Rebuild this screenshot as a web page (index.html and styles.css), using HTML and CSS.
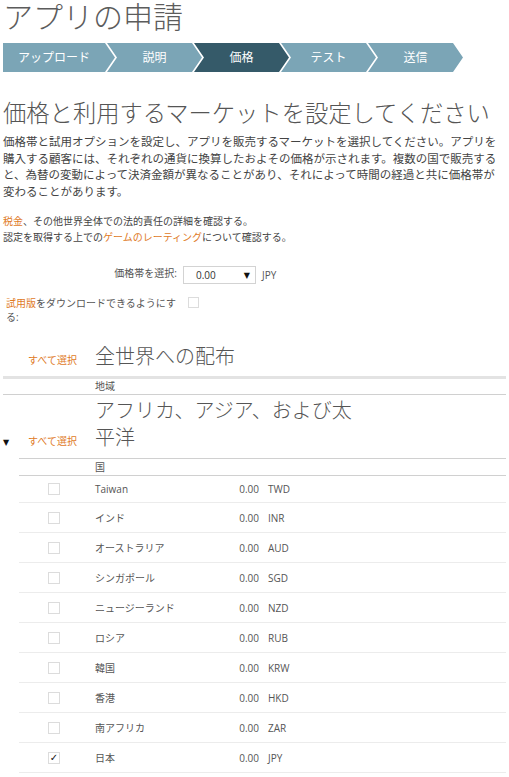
FILE: index.html
```html
<html>

<head>
  <meta charset="utf-8">
  <link rel="stylesheet" href="styles.css">
</head>

<body>
  <div class="page">
    <h1 class="page-title">アプリの申請</h1>

    <div class="steps">
      <div class="step">アップロード</div>
      <div class="step">説明</div>
      <div class="step current">価格</div>
      <div class="step">テスト</div>
      <div class="step">送信</div>
    </div>

    <h2 class="heading">価格と利用するマーケットを設定してください</h2>
    <p class="intro">価格帯と試用オプションを設定し、アプリを販売するマーケットを選択してください。アプリを購入する顧客には、それぞれの通貨に換算したおよその価格が示されます。複数の国で販売すると、為替の変動によって決済金額が異なることがあり、それによって時間の経過と共に価格帯が変わることがあります。</p>
    <p class="refs">
      <a href="#">税金</a>、その他世界全体での法的責任の詳細を確認する。<br>
      認定を取得する上での<a href="#">ゲームのレーティング</a>について確認する。
    </p>

    <div class="pricing">
      <div class="field">
        <label class="field-label right">価格帯を選択:</label>
        <div class="select"><span>0.00</span><span class="select-arrow">▼</span></div>
        <span class="currency">JPY</span>
      </div>
      <div class="field trial">
        <label class="field-label"><a href="#">試用版</a>をダウンロードできるようにする:</label>
        <span class="box"></span>
      </div>
    </div>

    <div class="markets">
      <div class="market-head world">
        <span class="toggle"></span>
        <a class="select-all" href="#">すべて選択</a>
        <div class="market-name">全世界への配布</div>
      </div>
      <div class="subhead">地域</div>

      <div class="market-head">
        <span class="toggle">▼</span>
        <a class="select-all" href="#">すべて選択</a>
        <div class="market-name">アフリカ、アジア、および太平洋</div>
      </div>
      <div class="region">
        <div class="subhead">国</div>
        <div class="country"><span class="box"></span><span>Taiwan</span><span class="price">0.00</span><span class="code">TWD</span></div>
        <div class="country"><span class="box"></span><span>インド</span><span class="price">0.00</span><span class="code">INR</span></div>
        <div class="country"><span class="box"></span><span>オーストラリア</span><span class="price">0.00</span><span class="code">AUD</span></div>
        <div class="country"><span class="box"></span><span>シンガポール</span><span class="price">0.00</span><span class="code">SGD</span></div>
        <div class="country"><span class="box"></span><span>ニュージーランド</span><span class="price">0.00</span><span class="code">NZD</span></div>
        <div class="country"><span class="box"></span><span>ロシア</span><span class="price">0.00</span><span class="code">RUB</span></div>
        <div class="country"><span class="box"></span><span>韓国</span><span class="price">0.00</span><span class="code">KRW</span></div>
        <div class="country"><span class="box"></span><span>香港</span><span class="price">0.00</span><span class="code">HKD</span></div>
        <div class="country"><span class="box"></span><span>南アフリカ</span><span class="price">0.00</span><span class="code">ZAR</span></div>
        <div class="country"><span class="box checked">✓</span><span>日本</span><span class="price">0.00</span><span class="code">JPY</span></div>
      </div>
    </div>
  </div>
</body>

</html>
```

FILE: styles.css
```css
body {
  margin: 0;
  font-family: "Open Sans", "Noto Sans CJK JP", sans-serif;
  color: #555;
  background: #fff;
}

a {
  color: #e07a1f;
  text-decoration: none;
}

.page {
  padding: 0 3px;
}

.page-title {
  margin: 0 0 9px;
  font-size: 30px;
  line-height: 34px;
  font-weight: 300;
  color: #5c5c5c;
}

/* wizard steps: each one is an arrow that fits into the notch of the next */
.steps {
  display: flex;
  height: 29px;
}

.step {
  box-sizing: border-box;
  width: 95px;
  margin-left: -8px;
  padding: 0 10px;
  background: #7ba5b6;
  color: #fff;
  font-size: 12px;
  line-height: 29px;
  text-align: center;
  clip-path: polygon(0 0, calc(100% - 10px) 0, 100% 50%, calc(100% - 10px) 100%, 0 100%, 10px 50%);
}

.step:first-child {
  width: 112px;
  margin-left: 0;
  padding-left: 0;
  clip-path: polygon(0 0, calc(100% - 10px) 0, 100% 50%, calc(100% - 10px) 100%, 0 100%);
}

.step.current {
  background: #355a69;
}

.heading {
  margin: 27px 0 0;
  font-size: 23.3px;
  line-height: 28px;
  font-weight: 300;
  color: #555;
}

.intro {
  margin: 7px 0 0;
  font-size: 11.5px;
  line-height: 16.5px;
  color: #444;
}

.refs {
  margin: 14px 0 0;
  font-size: 10px;
  line-height: 15.5px;
  color: #444;
}

/* price tier + trial */
.pricing {
  margin-top: 21px;
  padding-left: 3px;
}

.field {
  display: grid;
  grid-template-columns: 171px auto auto;
  column-gap: 6px;
  justify-content: start;
  align-items: center;
}

.field-label {
  align-self: start;
  font-size: 10px;
  line-height: 14px;
  color: #555;
}

.field-label.right {
  text-align: right;
}

.select {
  box-sizing: border-box;
  display: flex;
  align-items: center;
  justify-content: space-between;
  width: 73px;
  height: 18px;
  padding: 0 5px 0 12px;
  border: 1px solid #d3d3d3;
  font-size: 10px;
  color: #333;
}

.select-arrow {
  font-family: "DejaVu Sans", sans-serif;
  font-size: 8px;
  color: #111;
}

.currency {
  font-size: 10px;
  color: #555;
}

.trial {
  margin-top: 13px;
  align-items: start;
}

.trial .field-label {
  line-height: 13.5px;
}

.trial .box {
  margin-left: 5px;
}

.box {
  box-sizing: border-box;
  display: block;
  width: 11px;
  height: 11px;
  border: 1px solid #dcdcdc;
  background: #fff;
}

/* markets */
.markets {
  margin-top: 19px;
}

.market-head {
  display: grid;
  grid-template-columns: 25px 67px 270px;
  align-items: last baseline;
  padding: 2px 0 7px;
}

.market-head.world {
  padding: 0 0 6px;
  border-bottom: 3px solid #e3e3e3;
}

.toggle {
  font-family: "DejaVu Sans", sans-serif;
  font-size: 8px;
  color: #111;
}

.select-all {
  font-size: 10px;
}

.market-name {
  font-size: 20px;
  line-height: 27px;
  font-weight: 300;
  color: #555;
}

.subhead {
  padding-left: 92px;
  border-bottom: 1px solid #d0d0d0;
  font-size: 10px;
  line-height: 15px;
  color: #555;
}

.region {
  margin-left: 16px;
  border-top: 1px solid #d0d0d0;
}

.region .subhead {
  padding-left: 76px;
  line-height: 16px;
}

.country {
  box-sizing: border-box;
  display: grid;
  grid-template-columns: 76px 130px 34px auto;
  align-items: center;
  height: 30px;
  border-bottom: 1px solid #ececec;
  font-size: 10px;
  color: #555;
}

.subhead + .country {
  height: 27px;
}

.country .box {
  width: 12px;
  height: 12px;
  margin-left: 29px;
}

.box.checked {
  display: flex;
  align-items: center;
  justify-content: center;
  font-family: "DejaVu Sans", sans-serif;
  font-size: 10px;
  line-height: 1;
  color: #111;
}

.price {
  text-align: right;
}

.code {
  padding-left: 9px;
}
```
